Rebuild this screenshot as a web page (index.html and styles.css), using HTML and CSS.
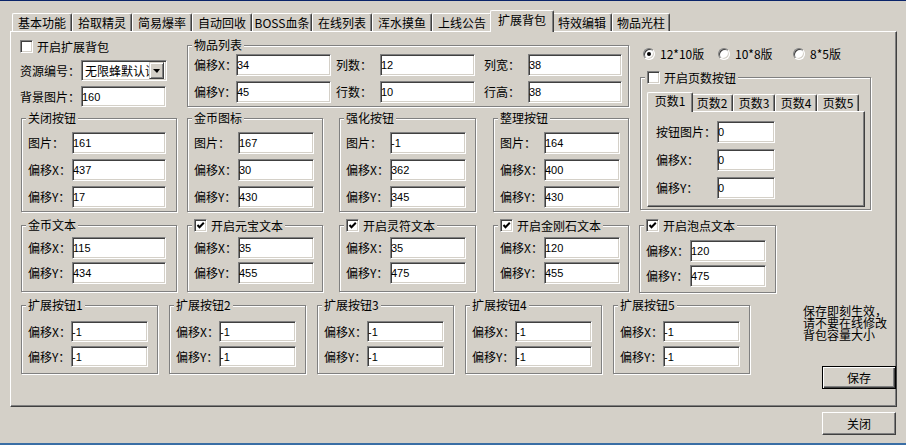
FILE: index.html
```html
<!doctype html>
<html lang="zh-CN">

<head>
    <meta charset="UTF-8" />
    <title>扩展背包</title>
    <link rel="stylesheet" href="styles.css">
</head>

<body>
    <div class="window">
        <div class="tabs">
            <div class="tab">基本功能</div>
            <div class="tab">拾取精灵</div>
            <div class="tab">简易爆率</div>
            <div class="tab">自动回收</div>
            <div class="tab">BOSS血条</div>
            <div class="tab">在线列表</div>
            <div class="tab">浑水摸鱼</div>
            <div class="tab">上线公告</div>
            <div class="tab active">扩展背包</div>
            <div class="tab">特效编辑</div>
            <div class="tab">物品光柱</div>
        </div>

        <div class="panel">
            <div class="upper">
                <div class="upper-left">
                    <div class="row1">
                        <div class="col-a">
                            <label class="check"><span class="box"></span>开启扩展背包</label>
                            <div class="field combo-row">
                                <span class="lbl wide-lbl">资源编号：</span>
                                <div class="combo">
                                    <span class="combo-text">无限蜂默认设置</span>
                                    <span class="combo-btn"><span class="arrow"></span></span>
                                </div>
                            </div>
                            <div class="field bg-row">
                                <span class="lbl wide-lbl">背景图片：</span>
                                <input class="edit bg-edit" value="160">
                            </div>
                        </div>

                        <div class="group items">
                            <div class="group-title">物品列表</div>
                            <div class="items-grid">
                                <span class="lbl">偏移X：</span><input class="edit" value="34">
                                <span class="lbl pad5">列数：</span><input class="edit" value="12">
                                <span class="lbl pad9">列宽：</span><input class="edit" value="38">
                                <span class="lbl">偏移Y：</span><input class="edit" value="45">
                                <span class="lbl pad5">行数：</span><input class="edit" value="10">
                                <span class="lbl pad9">行高：</span><input class="edit" value="38">
                            </div>
                        </div>
                    </div>

                    <div class="row2">
                        <div class="group g2 w156">
                            <div class="group-title">关闭按钮</div>
                            <div class="field"><span class="lbl">图片：</span><input class="edit" value="161"></div>
                            <div class="field"><span class="lbl">偏移X：</span><input class="edit" value="437"></div>
                            <div class="field"><span class="lbl">偏移Y：</span><input class="edit" value="17"></div>
                        </div>
                        <div class="group g2 w136">
                            <div class="group-title">金币图标</div>
                            <div class="field"><span class="lbl">图片：</span><input class="edit" value="167"></div>
                            <div class="field"><span class="lbl">偏移X：</span><input class="edit" value="30"></div>
                            <div class="field"><span class="lbl">偏移Y：</span><input class="edit" value="430"></div>
                        </div>
                        <div class="group g2 w137">
                            <div class="group-title">强化按钮</div>
                            <div class="field"><span class="lbl">图片：</span><input class="edit" value="-1"></div>
                            <div class="field"><span class="lbl">偏移X：</span><input class="edit" value="362"></div>
                            <div class="field"><span class="lbl">偏移Y：</span><input class="edit" value="345"></div>
                        </div>
                        <div class="group g2 w136">
                            <div class="group-title">整理按钮</div>
                            <div class="field"><span class="lbl">图片：</span><input class="edit" value="164"></div>
                            <div class="field"><span class="lbl">偏移X：</span><input class="edit" value="400"></div>
                            <div class="field"><span class="lbl">偏移Y：</span><input class="edit" value="430"></div>
                        </div>
                    </div>
                </div>

                <div class="upper-right">
                    <div class="radios">
                        <label class="radio-item"><span class="radio on"></span>12*10版</label>
                        <label class="radio-item"><span class="radio"></span>10*8版</label>
                        <label class="radio-item"><span class="radio"></span>8*5版</label>
                    </div>

                    <div class="group pages">
                        <div class="group-title"><span class="box"></span>开启页数按钮</div>
                        <div class="subtabs">
                            <div class="subtab active">页数1</div>
                            <div class="subtab">页数2</div>
                            <div class="subtab">页数3</div>
                            <div class="subtab">页数4</div>
                            <div class="subtab">页数5</div>
                        </div>
                        <div class="subpanel">
                            <div class="field"><span class="lbl">按钮图片：</span><input class="edit" value="0"></div>
                            <div class="field"><span class="lbl">偏移X：</span><input class="edit" value="0"></div>
                            <div class="field"><span class="lbl">偏移Y：</span><input class="edit" value="0"></div>
                        </div>
                    </div>
                </div>
            </div>

            <div class="row3">
                <div class="group g3 w156">
                    <div class="group-title">金币文本</div>
                    <div class="field"><span class="lbl">偏移X：</span><input class="edit" value="115"></div>
                    <div class="field"><span class="lbl">偏移Y：</span><input class="edit" value="434"></div>
                </div>
                <div class="group g3 w136">
                    <div class="group-title"><span class="box"><svg viewBox="0 0 9 9" width="9" height="9"><path d="M1.5 4 L3.5 6.2 L7.8 1.8" fill="none" stroke="#000" stroke-width="2"/></svg></span>开启元宝文本</div>
                    <div class="field"><span class="lbl">偏移X：</span><input class="edit" value="35"></div>
                    <div class="field"><span class="lbl">偏移Y：</span><input class="edit" value="455"></div>
                </div>
                <div class="group g3 w137">
                    <div class="group-title"><span class="box"><svg viewBox="0 0 9 9" width="9" height="9"><path d="M1.5 4 L3.5 6.2 L7.8 1.8" fill="none" stroke="#000" stroke-width="2"/></svg></span>开启灵符文本</div>
                    <div class="field"><span class="lbl">偏移X：</span><input class="edit" value="35"></div>
                    <div class="field"><span class="lbl">偏移Y：</span><input class="edit" value="475"></div>
                </div>
                <div class="group g3 w136">
                    <div class="group-title"><span class="box"><svg viewBox="0 0 9 9" width="9" height="9"><path d="M1.5 4 L3.5 6.2 L7.8 1.8" fill="none" stroke="#000" stroke-width="2"/></svg></span>开启金刚石文本</div>
                    <div class="field"><span class="lbl">偏移X：</span><input class="edit" value="120"></div>
                    <div class="field"><span class="lbl">偏移Y：</span><input class="edit" value="455"></div>
                </div>
                <div class="group g3 w137 bubble">
                    <div class="group-title"><span class="box"><svg viewBox="0 0 9 9" width="9" height="9"><path d="M1.5 4 L3.5 6.2 L7.8 1.8" fill="none" stroke="#000" stroke-width="2"/></svg></span>开启泡点文本</div>
                    <div class="field"><span class="lbl">偏移X：</span><input class="edit" value="120"></div>
                    <div class="field"><span class="lbl">偏移Y：</span><input class="edit" value="475"></div>
                </div>
            </div>

            <div class="row4">
                <div class="group g4">
                    <div class="group-title">扩展按钮1</div>
                    <div class="field"><span class="lbl">偏移X：</span><input class="edit" value="-1"></div>
                    <div class="field"><span class="lbl">偏移Y：</span><input class="edit" value="-1"></div>
                </div>
                <div class="group g4">
                    <div class="group-title">扩展按钮2</div>
                    <div class="field"><span class="lbl">偏移X：</span><input class="edit" value="-1"></div>
                    <div class="field"><span class="lbl">偏移Y：</span><input class="edit" value="-1"></div>
                </div>
                <div class="group g4">
                    <div class="group-title">扩展按钮3</div>
                    <div class="field"><span class="lbl">偏移X：</span><input class="edit" value="-1"></div>
                    <div class="field"><span class="lbl">偏移Y：</span><input class="edit" value="-1"></div>
                </div>
                <div class="group g4">
                    <div class="group-title">扩展按钮4</div>
                    <div class="field"><span class="lbl">偏移X：</span><input class="edit" value="-1"></div>
                    <div class="field"><span class="lbl">偏移Y：</span><input class="edit" value="-1"></div>
                </div>
                <div class="group g4">
                    <div class="group-title">扩展按钮5</div>
                    <div class="field"><span class="lbl">偏移X：</span><input class="edit" value="-1"></div>
                    <div class="field"><span class="lbl">偏移Y：</span><input class="edit" value="-1"></div>
                </div>
                <div class="side">
                    <div class="note">保存即刻生效，<br>请不要在线修改<br>背包容量大小</div>
                    <div class="button default save">保存</div>
                </div>
            </div>
        </div>

        <div class="footer">
            <div class="button">关闭</div>
        </div>
    </div>
</body>

</html>
```

FILE: styles.css
```css
* {
    box-sizing: border-box;
}

body {
    margin: 0;
    background-color: #d4d0c8;
    font-family: "Noto Sans CJK SC", sans-serif;
    font-size: 12px;
    line-height: 12px;
    color: #000;
}

.window {
    width: 906px;
    height: 445px;
    border-top: 1px solid #0a246a;
    border-bottom: 2px solid #3a6ea5;
    overflow: hidden;
}

/* main tab strip */
.tabs {
    display: flex;
    align-items: flex-end;
    height: 21px;
    margin: 9px 0 0 12px;
}

.tab {
    width: 60px;
    height: 18px;
    padding-top: 3px;
    text-align: center;
    white-space: nowrap;
    border: 1px solid #fff;
    border-right-color: #404040;
    border-bottom: none;
    border-radius: 2px 2px 0 0;
    box-shadow: inset -1px 0 #808080;
    background-color: #d4d0c8;
}

.tab.active {
    position: relative;
    z-index: 2;
    width: 64px;
    height: 22px;
    margin: 0 -2px -1px;
}

.tab:last-child {
    width: 58px;
}

.panel {
    width: 887px;
    height: 376px;
    margin-left: 10px;
    padding: 8px 0 0 9px;
    border: 1px solid;
    border-color: #fff #404040 #404040 #fff;
    box-shadow: inset -1px -1px #808080;
}

/* common controls */
.field {
    display: flex;
    align-items: center;
}

.lbl {
    white-space: nowrap;
    flex-shrink: 0;
}

.edit {
    height: 22px;
    margin: 0;
    padding: 0;
    border: 1px solid;
    border-color: #808080 #fff #fff #808080;
    box-shadow: inset 1px 1px #404040, inset -1px -1px #d4d0c8;
    background-color: #fff;
    font-family: "Liberation Sans", sans-serif;
    font-size: 11px;
    color: #000;
    outline: none;
}

.box {
    display: flex;
    align-items: center;
    justify-content: center;
    width: 13px;
    height: 13px;
    flex-shrink: 0;
    border: 1px solid;
    border-color: #808080 #fff #fff #808080;
    box-shadow: inset 1px 1px #404040, inset -1px -1px #d4d0c8;
    background-color: #fff;
}

.check {
    display: flex;
    align-items: center;
    gap: 4px;
    height: 13px;
}

.radio {
    position: relative;
    width: 12px;
    height: 12px;
    flex-shrink: 0;
    border-radius: 50%;
    border: 1px solid;
    border-color: #808080 #fff #fff #808080;
    box-shadow: inset 1px 1px #404040, inset -1px -1px #d4d0c8;
    background-color: #fff;
}

.radio.on::after {
    content: "";
    position: absolute;
    left: 3px;
    top: 3px;
    width: 4px;
    height: 4px;
    border-radius: 50%;
    background-color: #000;
}

.group {
    position: relative;
    display: flex;
    flex-direction: column;
    border: 1px solid #808080;
    box-shadow: inset 1px 1px #fff, 1px 1px #fff;
}

.group-title {
    position: absolute;
    top: -7px;
    left: 4px;
    display: flex;
    align-items: center;
    gap: 4px;
    padding: 0 2px;
    white-space: nowrap;
    background-color: #d4d0c8;
}

.button {
    width: 74px;
    height: 23px;
    padding-top: 5px;
    text-align: center;
    border: 1px solid;
    border-color: #fff #404040 #404040 #fff;
    box-shadow: inset -1px -1px #808080;
}

.button.default {
    border-color: #000;
    box-shadow: inset 1px 1px #fff, inset -1px -1px #404040, inset -2px -2px #808080;
}

/* upper block */
.upper {
    display: flex;
    align-items: flex-start;
}

.upper-left {
    width: 609px;
}

.row1 {
    display: flex;
    align-items: flex-start;
}

.col-a {
    width: 167px;
}

.wide-lbl {
    width: 61px;
}

.combo-row {
    margin-top: 7px;
}

.bg-row {
    margin-top: 5px;
}

.combo {
    display: flex;
    align-items: center;
    width: 86px;
    height: 21px;
    padding: 2px 2px 2px 3px;
    border: 1px solid;
    border-color: #808080 #fff #fff #808080;
    box-shadow: inset 1px 1px #404040, inset -1px -1px #d4d0c8;
    background-color: #fff;
}

.combo-text {
    flex: 1;
    overflow: hidden;
    white-space: nowrap;
}

.combo-btn {
    display: flex;
    align-items: center;
    justify-content: center;
    width: 15px;
    height: 17px;
    flex-shrink: 0;
    border: 1px solid;
    border-color: #d4d0c8 #404040 #404040 #d4d0c8;
    box-shadow: inset 1px 1px #fff, inset -1px -1px #808080;
    background-color: #d4d0c8;
}

.arrow {
    width: 0;
    height: 0;
    border-top: 4px solid #000;
    border-left: 4px solid transparent;
    border-right: 3px solid transparent;
}

.bg-edit {
    width: 85px;
    height: 21px;
}

.items {
    width: 442px;
    height: 62px;
    margin-top: 5px;
    padding: 8px 0 0 6px;
}

.items-grid {
    display: grid;
    grid-template-columns: 42px 95px 49px 95px 53px 94px;
    row-gap: 5px;
    align-items: center;
}

.pad5 {
    padding-left: 5px;
}

.pad9 {
    padding-left: 9px;
}

.row2 {
    display: grid;
    grid-template-columns: 166px 152px 154px 136px;
    align-items: start;
    margin: 11px 0 0 1px;
}

.w156 {
    width: 156px;
}

.w136 {
    width: 136px;
}

.w137 {
    width: 137px;
}

.g2 {
    height: 94px;
    gap: 5px;
    padding: 13px 0 0 6px;
}

.g2 .lbl,
.g3 .lbl {
    width: 44px;
}

.g2 .edit,
.g3 .edit {
    width: 76px;
}

.g2.w156 .edit,
.g3.w156 .edit {
    width: 94px;
}

.upper-right {
    width: 231px;
    margin-left: 11px;
}

.radios {
    display: flex;
    margin: 8px 0 0 3px;
}

.radio-item {
    display: flex;
    align-items: center;
    gap: 5px;
    width: 75px;
    height: 12px;
    white-space: nowrap;
}

.pages {
    height: 133px;
    margin-top: 17px;
    padding: 14px 0 0 6px;
}

.subtabs {
    display: flex;
    align-items: flex-end;
    height: 19px;
    margin-left: 2px;
}

.subtab {
    width: 42px;
    height: 17px;
    padding-top: 2px;
    text-align: center;
    border: 1px solid #fff;
    border-right-color: #404040;
    border-bottom: none;
    border-radius: 2px 2px 0 0;
    box-shadow: inset -1px 0 #808080;
    background-color: #d4d0c8;
}

.subtab.active {
    position: relative;
    z-index: 2;
    width: 46px;
    height: 20px;
    margin: 0 -2px -1px;
}

.subpanel {
    display: flex;
    flex-direction: column;
    gap: 6px;
    width: 218px;
    height: 96px;
    padding: 9px 0 0 8px;
    border: 1px solid;
    border-color: #fff #404040 #404040 #fff;
    box-shadow: inset -1px -1px #808080;
}

.subpanel .lbl {
    width: 61px;
}

.subpanel .edit {
    width: 58px;
}

/* row 3 */
.row3 {
    display: grid;
    grid-template-columns: 166px 152px 154px 146px 137px;
    align-items: start;
    margin: 13px 0 0 1px;
}

.g3 {
    height: 67px;
    gap: 3px;
    padding: 11px 0 0 6px;
}

.g3.bubble {
    height: 68px;
    padding-top: 14px;
}

/* row 4 */
.row4 {
    display: flex;
    align-items: flex-start;
    gap: 11px;
    margin: 12px 0 0 1px;
}

.g4 {
    width: 137px;
    height: 69px;
    gap: 4px;
    padding: 15px 0 0 6px;
}

.g4 .lbl {
    width: 43px;
}

.g4 .edit {
    width: 77px;
    height: 21px;
}

.side {
    margin-left: 42px;
}

.note {
    white-space: nowrap;
}

.save {
    margin: 25px 0 0 19px;
}

.footer {
    display: flex;
    justify-content: flex-end;
    margin: 5px 10px 0 0;
}
```
